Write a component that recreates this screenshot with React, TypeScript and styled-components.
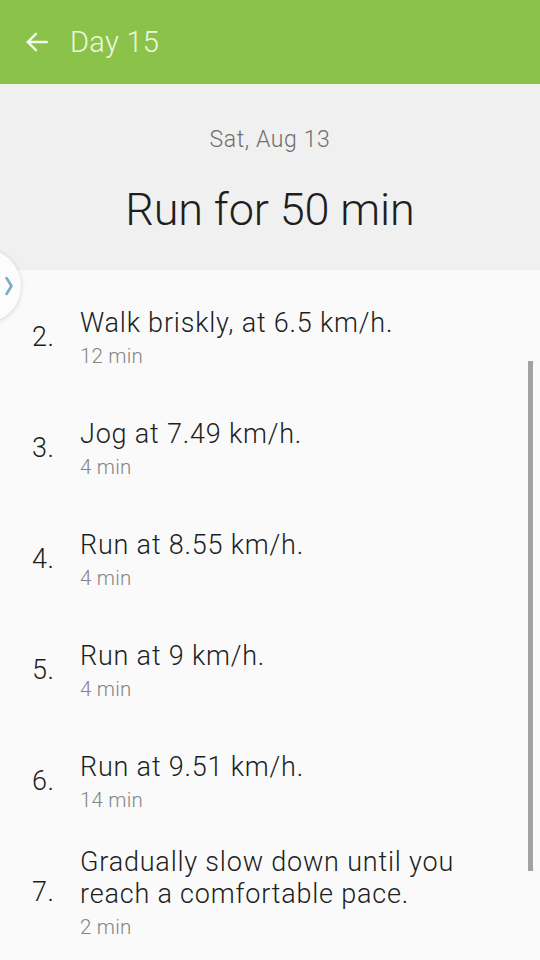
import React from "react";
import styled, { createGlobalStyle } from "styled-components";

const Global = createGlobalStyle`
  html, body { margin: 0; padding: 0; background: #fafafa; }
  body { font-family: Roboto, "Noto Sans", sans-serif; }
  * { box-sizing: border-box; }
`;

const Screen = styled.div`
  width: 540px;
  height: 960px;
  overflow: hidden;
  position: relative;
  background: #fafafa;
  display: flex;
  flex-direction: column;
`;

const AppBar = styled.header`
  height: 84px;
  background: #8bc34a;
  display: flex;
  align-items: center;
  padding-left: 24px;
  gap: 20px;
  flex-shrink: 0;
`;

const BackIcon = styled.svg`
  width: 26px;
  height: 26px;
  display: block;
`;

const Title = styled.h1`
  margin: 0;
  font-size: 29px;
  font-weight: 300;
  color: #eef8dc;
  letter-spacing: 0.3px;
`;

const Hero = styled.section`
  height: 186px;
  background: #f0f0f0;
  display: flex;
  flex-direction: column;
  align-items: center;
  padding-top: 42px;
  flex-shrink: 0;
`;

const DateText = styled.div`
  font-size: 23px;
  font-weight: 300;
  color: #6f6f6f;
  line-height: 28px;
  letter-spacing: 0.6px;
`;

const Heading = styled.div`
  margin-top: 29px;
  font-size: 45px;
  font-weight: 300;
  color: #1e1e1e;
  line-height: 54px;
  letter-spacing: -0.1px;
`;

const Body = styled.div`
  position: relative;
  flex: 1;
`;

const List = styled.ol`
  list-style: none;
  margin: 0;
  padding: 11px 0 0 0;
`;

const Row = styled.li`
  min-height: 111px;
  display: flex;
  align-items: center;
  padding-left: 32px;
`;

const Num = styled.span`
  width: 48px;
  font-size: 27px;
  font-weight: 300;
  color: #1e1e1e;
  flex-shrink: 0;
  letter-spacing: 0.5px;
`;

const Text = styled.div`
  display: flex;
  flex-direction: column;
  padding-top: 5px;
`;

const StepTitle = styled.div`
  font-size: 27px;
  font-weight: 300;
  color: #1e1e1e;
  line-height: 32px;
  letter-spacing: 0.8px;
`;

const StepSub = styled.div`
  margin-top: 2px;
  font-size: 20.5px;
  font-weight: 300;
  color: #858585;
  line-height: 30px;
  letter-spacing: 0.2px;
`;

const Scrollbar = styled.div`
  position: absolute;
  right: 7px;
  top: 91px;
  width: 5px;
  height: 510px;
  background: #a2a2a2;
`;

const Handle = styled.div`
  position: absolute;
  left: -53px;
  top: 249px;
  width: 74px;
  height: 74px;
  border-radius: 50%;
  background: #fcfcfc;
  box-shadow: 0 1px 5px rgba(0, 0, 0, 0.16);
  display: flex;
  align-items: center;
  justify-content: flex-end;
  padding-right: 7px;
`;

const steps = [
  { n: "2.", t: ["Walk briskly, at 6.5 km/h."], s: "12 min" },
  { n: "3.", t: ["Jog at 7.49 km/h."], s: "4 min" },
  { n: "4.", t: ["Run at 8.55 km/h."], s: "4 min" },
  { n: "5.", t: ["Run at 9 km/h."], s: "4 min" },
  { n: "6.", t: ["Run at 9.51 km/h."], s: "14 min" },
  { n: "7.", t: ["Gradually slow down until you", "reach a comfortable pace."], s: "2 min" },
];

export default function App() {
  return (
    <Screen>
      <Global />
      <AppBar>
        <BackIcon viewBox="0 0 24 24" fill="none" stroke="#f4faec" strokeWidth="2.2" strokeLinecap="round" strokeLinejoin="round">
          <path d="M21 12H3.5" />
          <path d="M11 4.5L3.5 12L11 19.5" />
        </BackIcon>
        <Title>Day 15</Title>
      </AppBar>
      <Hero>
        <DateText>Sat, Aug 13</DateText>
        <Heading>Run for 50 min</Heading>
      </Hero>
      <Body>
        <List>
          {steps.map((st) => (
            <Row key={st.n}>
              <Num>{st.n}</Num>
              <Text>
                {st.t.map((line) => (
                  <StepTitle key={line}>{line}</StepTitle>
                ))}
                <StepSub>{st.s}</StepSub>
              </Text>
            </Row>
          ))}
        </List>
        <Scrollbar />
      </Body>
      <Handle>
        <svg width="10" height="22" viewBox="0 0 10 22" fill="none" stroke="#72aec4" strokeWidth="2.6" strokeLinecap="round" strokeLinejoin="round">
          <path d="M2.5 3L7.5 11L2.5 19" />
        </svg>
      </Handle>
    </Screen>
  );
}
